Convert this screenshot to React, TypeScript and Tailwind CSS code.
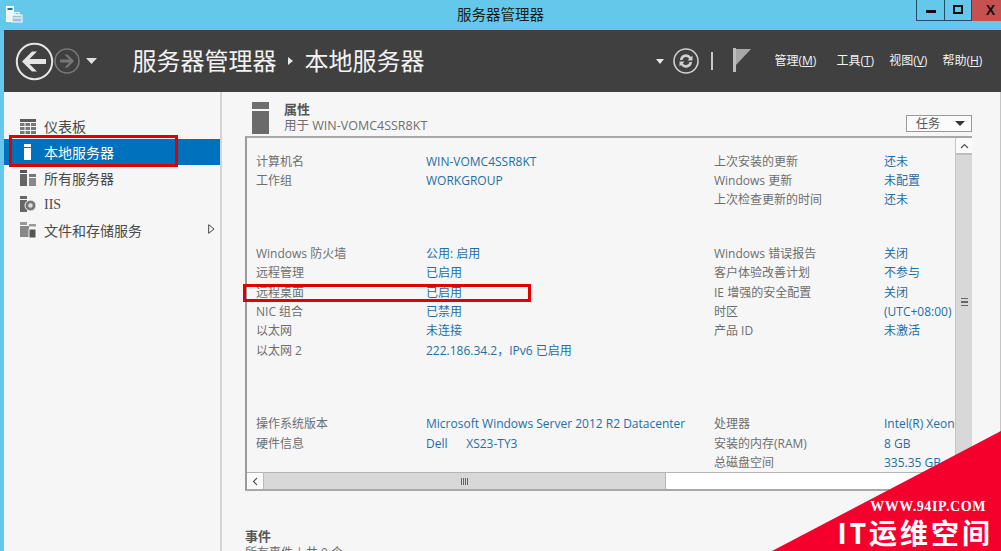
import React from "react";

const rows1 = [
  ["计算机名", "WIN-VOMC4SSR8KT", "上次安装的更新", "还未"],
  ["工作组", "WORKGROUP", "Windows 更新", "未配置"],
  ["", "", "上次检查更新的时间", "还未"],
];
const rows2 = [
  ["Windows 防火墙", "公用: 启用", "Windows 错误报告", "关闭"],
  ["远程管理", "已启用", "客户体验改善计划", "不参与"],
  ["远程桌面", "已启用", "IE 增强的安全配置", "关闭"],
  ["NIC 组合", "已禁用", "时区", "(UTC+08:00) 北京，重庆"],
  ["以太网", "未连接", "产品 ID", "未激活"],
  ["以太网 2", "222.186.34.2，IPv6 已启用", "", ""],
];
const rows3 = [
  ["操作系统版本", "Microsoft Windows Server 2012 R2 Datacenter", "处理器", "Intel(R) Xeon(R) CPU"],
  ["硬件信息", "Dell      XS23-TY3", "安装的内存(RAM)", "8 GB"],
  ["", "", "总磁盘空间", "335.35 GB"],
];

function Block({ rows, className }: { rows: string[][]; className: string }) {
  return (
    <div className={"grid grid-cols-[170px_288px_170px_200px] auto-rows-[19.4px] items-center " + className}>
      {rows.map((r, i) => (
        <React.Fragment key={i}>
          <div className="text-[#6e6e6e] whitespace-nowrap">{r[0]}</div>
          <div className="text-[#1f6ea6] whitespace-pre">{r[1]}</div>
          <div className="text-[#6e6e6e] whitespace-nowrap">{r[2]}</div>
          <div className="text-[#1f6ea6] whitespace-nowrap">{r[3]}</div>
        </React.Fragment>
      ))}
    </div>
  );
}

function Menu({ t, k, className }: { t: string; k: string; className: string }) {
  return (
    <span className={"text-[12px] text-[#f2f2f2] whitespace-nowrap " + className}>
      {t}(<span className="underline">{k}</span>)
    </span>
  );
}

function SideItem({ icon, label, active }: { icon: React.ReactNode; label: string; active?: boolean }) {
  return (
    <div className={"h-[26px] flex items-center pl-4 " + (active ? "bg-[#0071bc] text-white" : "text-[#4a4a4a]")}>
      <span className="w-[24px] h-[18px] flex items-center">{icon}</span>
      <span className={label === "IIS" ? "font-['Liberation_Serif'] text-[14px]" : "text-[14px]"}>{label}</span>
    </div>
  );
}

export default function App() {
  return (
    <div className="relative w-[1001px] h-[551px] overflow-hidden bg-[#63c8ea] flex flex-col font-['Open_Sans','Noto_Sans_CJK_SC',sans-serif] text-[12px]">
      {/* Title bar */}
      <div className="h-[30px] shrink-0 flex items-start relative">
        <svg className="ml-[6px] mt-[6px]" width="17" height="17" viewBox="0 0 17 17">
          <rect x="0.5" y="0.5" width="7" height="15" fill="#e8f6fb" stroke="#fff" />
          <rect x="1.5" y="2" width="5" height="2" fill="#2f6f96" />
          <rect x="6" y="9" width="10" height="7" fill="#9dc2d4" stroke="#fff" />
          <rect x="9" y="6.5" width="4" height="2.5" fill="none" stroke="#fff" />
          <rect x="7" y="11.5" width="8" height="1" fill="#fff" />
        </svg>
        <div className="absolute left-0 right-0 top-[5px] text-center text-[14.5px] leading-[19px] text-[#1c1c1c]">服务器管理器</div>
        <div className="ml-auto flex h-[21px]">
          <div className="w-[29px] border border-t-0 border-[#1f4f66] flex items-center justify-center">
            <div className="w-[10px] h-[3px] bg-[#101010] mt-[3px]" />
          </div>
          <div className="w-[27px] border-r border-b border-[#1f4f66] flex items-center justify-center">
            <div className="w-[10px] h-[9px] border-2 border-[#101010] -mt-[1px]" />
          </div>
          <div className="w-[29px] bg-[#c75050] flex items-center justify-center font-bold text-[14px] text-[#111] pl-[8px] font-['Liberation_Sans',sans-serif]">X</div>
        </div>
      </div>

      <div className="flex-1 ml-[4px] flex flex-col min-h-0">
        {/* Header */}
        <div className="h-[62px] shrink-0 bg-[#404040] flex items-center relative">
          <svg className="ml-[11px]" width="39" height="39" viewBox="0 0 39 39">
            <circle cx="19.5" cy="19.5" r="17.7" fill="none" stroke="#e4e4e4" strokeWidth="2" />
            <path d="M7 19.5 L17 9.5 H22 L14.5 17 H31 V22 H14.5 L22 29.5 H17 Z" fill="#e4e4e4" />
          </svg>
          <svg className="-ml-[0.5px]" width="26" height="26" viewBox="0 0 26 26">
            <circle cx="13" cy="13" r="12" fill="none" stroke="#777" strokeWidth="1.6" />
            <path d="M20 13 L13.5 6.5 H10.5 L15.5 11.5 H6 V14.5 H15.5 L10.5 19.5 H13.5 Z" fill="#777" />
          </svg>
          <svg className="ml-[6px]" width="11" height="6" viewBox="0 0 11 6">
            <path d="M0 0 H11 L5.5 6 Z" fill="#e0e0e0" />
          </svg>
          <span className="ml-[36px] text-[24px] leading-[32px] text-[#f2f2f2] whitespace-nowrap">服务器管理器</span>
          <svg className="ml-[11px]" width="5" height="8" viewBox="0 0 5 8">
            <path d="M0 0 L5 4 L0 8 Z" fill="#e8e8e8" />
          </svg>
          <span className="ml-[12px] text-[24px] leading-[32px] text-[#f2f2f2] whitespace-nowrap">本地服务器</span>

          <svg className="ml-[231px]" width="8" height="5" viewBox="0 0 8 5">
            <path d="M0 0 H8 L4 5 Z" fill="#e8e8e8" />
          </svg>
          <svg className="ml-[9px]" width="26" height="26" viewBox="0 0 26 26">
            <circle cx="13" cy="13" r="12" fill="none" stroke="#d0d0d0" strokeWidth="1.6" />
            <path d="M7 12 A6 6 0 0 1 18 9 L19.5 7.5 V12.5 H14.5 L16.2 10.8 A3.6 3.6 0 0 0 9.5 12 Z" fill="#d0d0d0" />
            <path d="M19 14 A6 6 0 0 1 8 17 L6.5 18.5 V13.5 H11.5 L9.8 15.2 A3.6 3.6 0 0 0 16.5 14 Z" fill="#d0d0d0" />
          </svg>
          <div className="ml-[12px] w-[2px] h-[18px] bg-[#c8c8c8]" />
          <svg className="ml-[20px] -mt-[2px]" width="18" height="24" viewBox="0 0 18 24">
            <rect x="0" y="0" width="3" height="24" fill="#bdbdbd" />
            <path d="M3 1 H18 L3 17 Z" fill="#a8a8a8" />
          </svg>
          <Menu t="管理" k="M" className="ml-[24px] -mt-[1px]" />
          <Menu t="工具" k="T" className="ml-[20px] -mt-[1px]" />
          <Menu t="视图" k="V" className="ml-[15px] -mt-[1px]" />
          <Menu t="帮助" k="H" className="ml-[15px] -mt-[1px]" />
        </div>

        <div className="flex-1 flex min-h-0">
          {/* Sidebar */}
          <div className="relative w-[216px] shrink-0 bg-[#f6f6f6] pt-[21px]">
            <SideItem
              label="仪表板"
              icon={
                <svg width="16" height="15" viewBox="0 0 16 15">
                  <rect width="16" height="3" fill="#5a5a5a" />
                  <path d="M0 4 H4.5 V7 H0Z M5.5 4 H10 V7 H5.5Z M11 4 H16 V7 H11Z M0 8 H4.5 V11 H0Z M5.5 8 H10 V11 H5.5Z M11 8 H16 V11 H11Z M0 12 H4.5 V15 H0Z M5.5 12 H10 V15 H5.5Z M11 12 H16 V15 H11Z" fill="#777" />
                </svg>
              }
            />
            <SideItem
              active
              label="本地服务器"
              icon={
                <svg className="ml-[4px]" width="7" height="16" viewBox="0 0 7 16">
                  <rect width="7" height="3" fill="#fff" />
                  <rect y="4" width="7" height="12" fill="#fff" />
                </svg>
              }
            />
            <SideItem
              label="所有服务器"
              icon={
                <svg width="16" height="16" viewBox="0 0 16 16">
                  <rect width="7" height="3" fill="#555" />
                  <rect y="4" width="7" height="12" fill="#666" />
                  <rect x="9" y="4" width="7" height="3" fill="#777" />
                  <rect x="9" y="8" width="7" height="8" fill="#888" />
                </svg>
              }
            />
            <SideItem
              label="IIS"
              icon={
                <svg width="16" height="16" viewBox="0 0 16 16">
                  <rect x="0" y="0" width="7" height="3" fill="#666" />
                  <rect x="0" y="4" width="7" height="12" fill="#666" />
                  <circle cx="10.5" cy="9.5" r="5.5" fill="#777" stroke="#f6f6f6" />
                  <circle cx="10.5" cy="9.5" r="2.2" fill="#ddd" />
                </svg>
              }
            />
            <SideItem
              label="文件和存储服务"
              icon={
                <svg width="16" height="16" viewBox="0 0 16 16">
                  <rect x="0" y="0" width="7" height="3" fill="#999" />
                  <rect x="0" y="4" width="9" height="11" fill="#888" />
                  <rect x="9" y="2" width="7" height="2.5" fill="#999" />
                  <path d="M9 7 H16 V16 H9Z" fill="#555" stroke="#f6f6f6" />
                </svg>
              }
            />
            <svg className="absolute left-[204px] top-[132px]" width="7" height="10" viewBox="0 0 7 10">
              <path d="M0.7 0.7 L6 5 L0.7 9.3 Z" fill="none" stroke="#444" />
            </svg>
          </div>
          <div className="w-[2px] shrink-0 bg-[#d4d4d4]" />

          {/* Content */}
          <div className="flex-1 min-w-0 bg-[#f6f6f6] border-r border-r-[#c4c4c4] pl-[23px] overflow-hidden">
            <div className="flex h-[44px] pt-[10px] pl-[7px] relative">
              <svg width="18" height="32" viewBox="0 0 18 32">
                <rect width="17" height="7" fill="#6f6f6f" />
                <rect y="9" width="17" height="23" fill="#6a6a6a" />
              </svg>
              <div className="ml-[14px] -mt-[2px]">
                <div className="text-[13px] leading-[18px] font-bold text-[#555]">属性</div>
                <div className="text-[12.5px] leading-[16px] text-[#6e6e6e]">用于 WIN-VOMC4SSR8KT</div>
              </div>
              <div className="ml-auto mr-[28px] mt-[13px] w-[66px] h-[17px] bg-[#fbfbfb] border border-[#9a9a9a] flex items-center justify-between pl-[9px] pr-[6px] text-[12px] text-[#555]">
                <span>任务</span>
                <svg width="10" height="5" viewBox="0 0 10 5">
                  <path d="M0 0 H10 L5 5 Z" fill="#333" />
                </svg>
              </div>
            </div>

            {/* Properties panel */}
            <div className="w-[727px] h-[355px] border-t-2 border-l-2 border-b-2 border-[#a8a8a8] border-l-[#9a9a9a] flex flex-col">
              <div className="flex-1 flex min-h-0">
                <div className="flex-1 min-w-0 overflow-hidden pl-[9px] pt-[14px]">
                  <Block rows={rows1} className="" />
                  <Block rows={rows2} className="mt-[34px]" />
                  <Block rows={rows3} className="mt-[54px]" />
                </div>
                <div className="w-[17px] shrink-0 bg-[#d8d8d8] border-l border-l-[#c4c4c4] flex flex-col items-center relative">
                  <div className="w-full h-[17px] bg-[#fafafa] border-b-2 border-b-[#bdbdbd] flex items-center justify-center">
                    <svg width="9" height="6" viewBox="0 0 9 6">
                      <path d="M1 5 L4.5 1.5 L8 5" fill="none" stroke="#555" strokeWidth="1.2" />
                    </svg>
                  </div>
                  <div className="mt-[143px] w-[7px] h-[8px] border-y border-[#666] flex items-center">
                    <div className="w-full h-[2px] bg-[#666]" />
                  </div>
                </div>
              </div>
              <div className="h-[17px] shrink-0 bg-white flex border-t border-t-[#b4b4b4]">
                <div className="w-[17px] bg-[#fafafa] border-r border-r-[#bbb] flex items-center justify-center">
                  <svg width="6" height="9" viewBox="0 0 6 9">
                    <path d="M5 1 L1.5 4.5 L5 8" fill="none" stroke="#555" strokeWidth="1.2" />
                  </svg>
                </div>
                <div className="w-[402px] bg-[#d8d8d8] border-r border-r-[#b4b4b4] flex items-center justify-center">
                  <div className="w-[8px] h-[7px] bg-[repeating-linear-gradient(90deg,#666_0,#666_1px,transparent_1px,transparent_2px)]" />
                </div>
              </div>
            </div>

            <div className="mt-[36px] text-[13px] leading-[18px] font-bold text-[#555]">事件</div>
            <div className="text-[12px] leading-[16px] text-[#6e6e6e]">所有事件 | 共 0 个</div>
          </div>
        </div>
      </div>

      {/* Red annotations */}
      <div className="absolute left-[9px] top-[135px] w-[169px] h-[32px] border-[3px] border-[#e00000]" />
      <div className="absolute left-[243px] top-[284px] w-[288px] h-[18px] border-[3px] border-[#e00000]" />

      {/* Watermark */}
      <div className="absolute left-[772px] top-[431px] w-[229px] h-[120px] bg-[#f5002d] [clip-path:polygon(100%_0,100%_100%,0_100%)]">
        <div className="absolute right-[15px] top-[68px] font-['Liberation_Serif',serif] font-bold text-[14px] leading-[16px] tracking-[0.6px] text-white whitespace-nowrap">WWW.94IP.COM</div>
        <div className="absolute right-[8px] top-[85px] font-bold text-[28px] leading-[34px] tracking-[3px] text-white whitespace-nowrap">IT运维空间</div>
      </div>
    </div>
  );
}
